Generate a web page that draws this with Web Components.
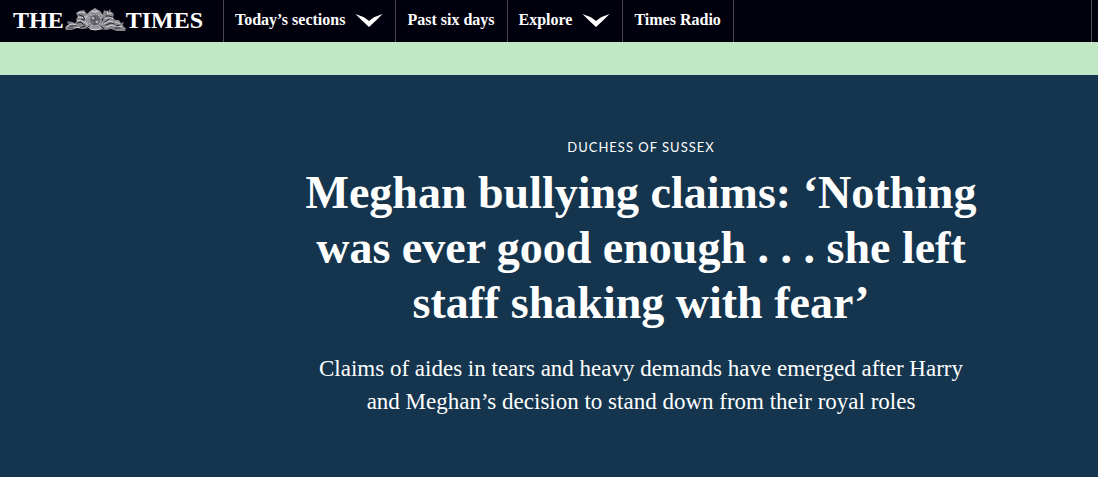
<!DOCTYPE html>
<html lang="en">
<head>
<meta charset="utf-8">
<meta name="viewport" content="width=device-width, initial-scale=1">
<title>Meghan bullying claims | The Times</title>
<style>
  html { background: #14354d; }
  body { margin: 0; font-family: "Liberation Serif", "Times New Roman", serif; color: #fff; }
</style>
</head>
<body>
<times-header>
  <times-logo slot="logo"></times-logo>
  <nav-item menu>Today’s sections</nav-item>
  <nav-item>Past six days</nav-item>
  <nav-item menu>Explore</nav-item>
  <nav-item>Times Radio</nav-item>
</times-header>
<ad-strip></ad-strip>
<article-hero>
  <span slot="label">DUCHESS OF SUSSEX</span>
  <span slot="headline">Meghan bullying claims: ‘Nothing<br>was ever good enough . . . she left<br>staff shaking with fear’</span>
  <span slot="standfirst">Claims of aides in tears and heavy demands have emerged after Harry<br>and Meghan’s decision to stand down from their royal roles</span>
</article-hero>

<template id="t-header">
  <style>
    :host { display: block; background: #01000d; }
    header { display: flex; height: 42px; padding-right: 6px; }
    .logo { flex: 0 0 223px; display: flex; align-items: center; box-sizing: border-box; padding: 0 0 2px 13px; }
    nav { position: relative; display: flex; flex: 1; }
    nav::after { content: ""; position: absolute; top: 0; right: 0; bottom: -3px; width: 1px; background: rgba(255, 255, 255, .3); }
  </style>
  <header>
    <div class="logo"><slot name="logo"></slot></div>
    <nav aria-label="Main"><slot></slot></nav>
  </header>
</template>

<template id="t-logo">
  <style>
    :host { display: block; }
    a { display: flex; align-items: center; color: #fff; text-decoration: none; font-size: 24px; line-height: 24px; font-weight: 700; }
    svg { display: block; width: 62px; height: 24px; }
  </style>
  <a href="#" aria-label="The Times">
    <span>THE</span>
    <svg viewBox="0 0 62 24" aria-hidden="true">
      <g fill="#85858c">
        <path d="M2 14l3 2-2-3 5 1 3 1 2-2-1-2 2-2-2-4 3-2 5-1 3 4 3 2 1 5-1 7-7 1-6-1-5 2H2l-1-3 4-2z"/>
        <path d="M60 14l-3 1-2-3-4 0-2-3 1-3-3-2-1-3-2 3-4-2-1 4-4 4-1 7 1 4 7 1 5-1 6 2h8l1-3-4-2z"/>
      </g>
      <path d="M23 6l3-3 2-1 3-2 3 2 2 1 3 4v10l-3 4-3 1h-5l-5-3z" fill="#9b9ba1"/>
      <circle cx="31" cy="12" r="7" fill="#6b6b73"/>
      <circle cx="31" cy="12" r="6" fill="none" stroke="#bdbdc2" stroke-width="1.2" stroke-dasharray="2 .8"/>
      <path d="M28 9h3v3h-3zm3 3h3v3h-3z" fill="#b5b5ba"/>
      <path d="M31 8v9M27 12h8" stroke="#45454e"/>
      <g fill="none" stroke="#d5d5d9" stroke-width="1" stroke-linecap="round">
        <path d="M14 5l3-1 4 1m-7 4l5 1 3-2M13 13l4-1 4 3M3 18l5-2 4 1m-9 3l8-1 7 1m5-12l-2 4 2 5"/>
        <path d="M43 3l1 3 4-1m-7 6l5-2 3 2M40 16l5-3 4 1m-7 5l6-2 5 2 6-1m-8-4l4 1 1 2"/>
        <path d="M26 21l5 1 6-1M28 3l3 1 3-1"/>
      </g>
      <g fill="none" stroke="#25252f" stroke-width="1" stroke-linecap="round">
        <path d="M15 7l4 1 2 4m-8 3l4-1 3 3M6 18h6m4 2l5-2M17 11l3 1M4 20h5"/>
        <path d="M42 8h3l3 1m-7 5l4-3m-3 6l5-2 3 1m2 2l4-1M39 10l-1 3M23 20l2-2m12 0l3 3m11-1h5"/>
      </g>
    </svg>
    <span>TIMES</span>
  </a>
</template>

<template id="t-item">
  <style>
    :host { display: flex; border-left: 1px solid #4a4952; }
    :host(:last-of-type) { border-right: 1px solid #4a4952; }
    a, button { display: flex; align-items: center; gap: 10px; box-sizing: border-box; padding: 0 12px 2px 11px; margin: 0; border: 0; background: none; color: #fff; font-family: inherit; font-size: 16px; line-height: 20px; font-weight: 700; text-decoration: none; white-space: nowrap; cursor: pointer; }
    svg { display: block; width: 28px; height: 14px; }
  </style>
</template>

<template id="t-hero">
  <style>
    :host { display: block; background: #14354d; padding: 62px 0 56px 184px; text-align: center; }
    p, h1 { margin: 0; }
    .label { font-family: Lato, sans-serif; font-size: 13px; line-height: 20px; letter-spacing: 1px; }
    h1 { font-size: 46px; line-height: 55px; font-weight: 700; margin-top: 8px; }
    .standfirst { font-size: 23px; line-height: 33px; margin-top: 22px; }
  </style>
  <article>
    <p class="label"><slot name="label"></slot></p>
    <h1><slot name="headline"></slot></h1>
    <p class="standfirst"><slot name="standfirst"></slot></p>
  </article>
</template>

<script>
  function stamp(host, id) {
    const root = host.attachShadow({ mode: "open" });
    root.append(document.getElementById(id).content.cloneNode(true));
    return root;
  }
  customElements.define("times-header", class extends HTMLElement {
    constructor() { super(); stamp(this, "t-header"); }
  });
  customElements.define("times-logo", class extends HTMLElement {
    constructor() { super(); stamp(this, "t-logo"); }
  });
  customElements.define("nav-item", class extends HTMLElement {
    constructor() {
      super();
      const root = stamp(this, "t-item");
      const holder = document.createElement("template");
      holder.innerHTML = this.hasAttribute("menu")
        ? '<button type="button" aria-haspopup="true"><slot></slot><svg viewBox="0 0 28 14" aria-hidden="true"><path d="M.5 1L9 4.200L14 8L19 4.200L27.500 1L21 7.500L14 14L7 7.500Z" fill="#fff"/></svg></button>'
        : '<a href="#"><slot></slot></a>';
      root.append(holder.content);
    }
  });
  customElements.define("ad-strip", class extends HTMLElement {
    constructor() {
      super();
      this.attachShadow({ mode: "open" }).innerHTML =
        "<style>:host { display: block; height: 33px; background: #c2e7c5; }</style>";
    }
  });
  customElements.define("article-hero", class extends HTMLElement {
    constructor() { super(); stamp(this, "t-hero"); }
  });
</script>
</body>
</html>
